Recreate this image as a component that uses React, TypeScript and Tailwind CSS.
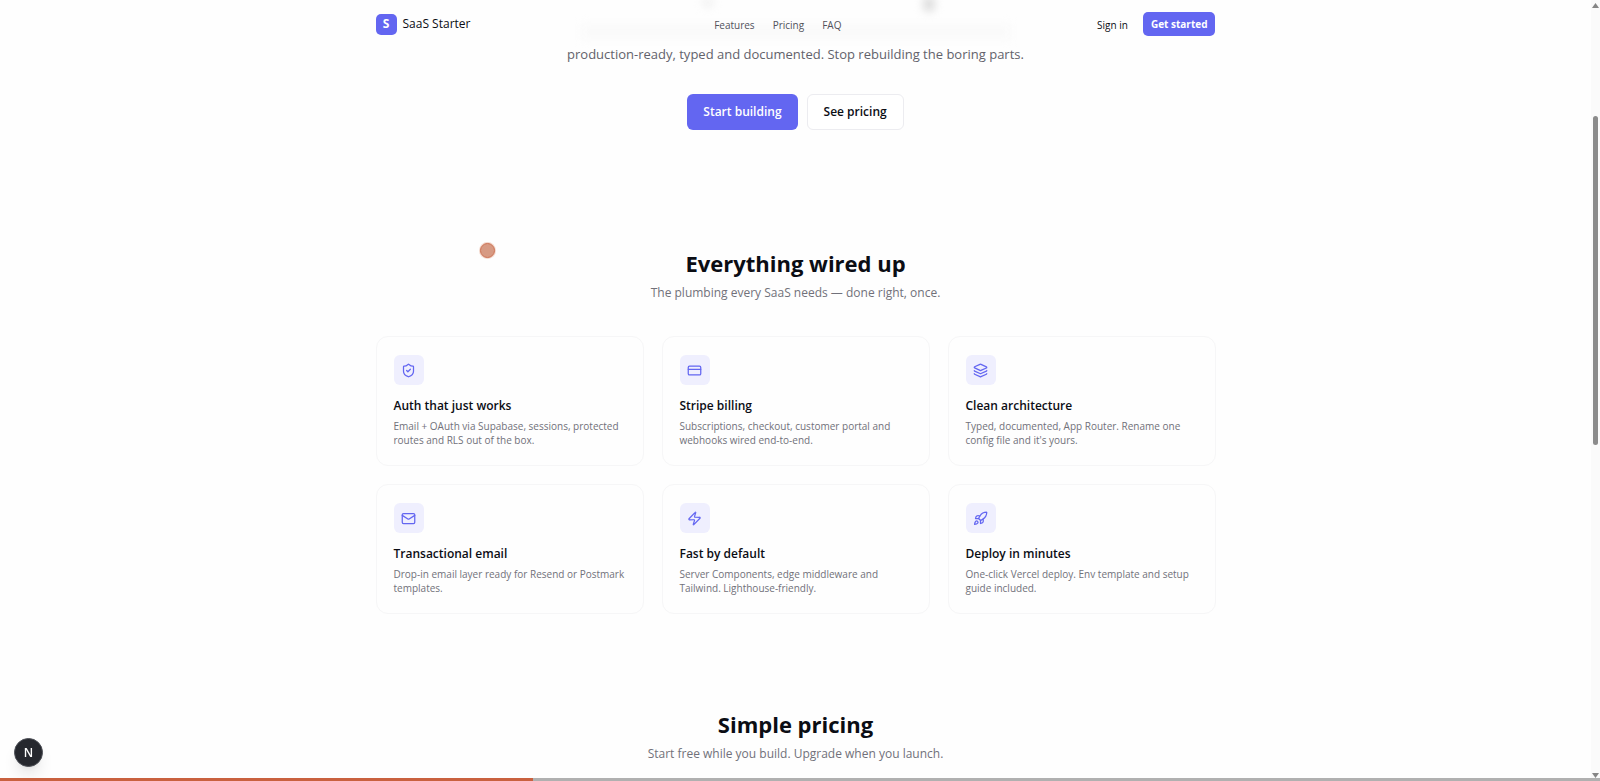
import { CreditCard, Layers, Mail, Rocket, ShieldCheck, Zap } from "lucide-react";

const navLinks = [
    { label: "Features", href: "#features" },
    { label: "Pricing", href: "#pricing" },
    { label: "FAQ", href: "#faq" },
];

const features = [
    {
        icon: ShieldCheck,
        title: "Auth that just works",
        description: "Email + OAuth via Supabase, sessions, protected routes and RLS out of the box.",
    },
    {
        icon: CreditCard,
        title: "Stripe billing",
        description: "Subscriptions, checkout, customer portal and webhooks wired end-to-end.",
    },
    {
        icon: Layers,
        title: "Clean architecture",
        description: "Typed, documented, App Router. Rename one config file and it's yours.",
    },
    {
        icon: Mail,
        title: "Transactional email",
        description: "Drop-in email layer ready for Resend or Postmark templates.",
    },
    {
        icon: Zap,
        title: "Fast by default",
        description: "Server Components, edge middleware and Tailwind. Lighthouse-friendly.",
    },
    {
        icon: Rocket,
        title: "Deploy in minutes",
        description: "One-click Vercel deploy. Env template and setup guide included.",
    },
];

const Header = () => {
    return (
        <header className="relative h-12">
            {/* hero copy showing faintly through the translucent bar */}
            <div aria-hidden="true" className="absolute inset-0 overflow-hidden">
                <div className="absolute left-1/2 top-6 h-4 w-[430px] -translate-x-1/2 bg-[#fafafa] blur-xs" />
                <div className="absolute left-1/2 -top-1 ml-[-94px] h-3 w-3 rounded-full bg-[#f2f2f2] blur-xs" />
                <div className="absolute left-1/2 -top-1 ml-[127px] h-4 w-3 rounded-full bg-[#dcdcdc] blur-xs" />
            </div>
            <div className="relative mx-auto flex h-full max-w-[840px] items-center justify-between">
                <a href="#" className="flex items-center gap-1.5 text-[12px] font-medium text-[#0b0d14]">
                    <span className="flex h-[21px] w-[21px] items-center justify-center rounded-[5px] bg-[#6366f1] font-bold text-white">
                        S
                    </span>
                    SaaS Starter
                </a>
                <nav className="flex items-center gap-[18px] pt-0.5 pr-3 text-[10px] text-[#52525b]">
                    {navLinks.map((link) => (
                        <a key={link.label} href={link.href}>
                            {link.label}
                        </a>
                    ))}
                </nav>
                <div className="flex items-center gap-[15px] text-[10px]">
                    <a href="#" className="pt-0.5 font-medium text-[#0b0d14]">Sign in</a>
                    <button className="h-6 rounded-[5px] bg-[#6366f1] px-2 font-bold text-white">
                        Get started
                    </button>
                </div>
            </div>
        </header>
    );
};

const Hero = () => {
    return (
        <section className="flex flex-col items-center gap-[34px] pb-[118px]">
            <p className="text-[13px] leading-3 text-[#62626b]">
                production-ready, typed and documented. Stop rebuilding the boring parts.
            </p>
            <div className="flex gap-[9px] text-[12px]">
                <button className="h-9 rounded-md bg-[#6366f1] px-4 font-semibold text-white">
                    Start building
                </button>
                <button className="h-9 rounded-md border border-[#ececf0] bg-white px-4 font-semibold text-[#0b0d14]">
                    See pricing
                </button>
            </div>
        </section>
    );
};

const SectionHeading = ({ title, subtitle }: { title: string; subtitle: string }) => {
    return (
        <div className="text-center">
            <h2 className="text-[22px] leading-[30px] font-bold text-[#0b0d14]">{title}</h2>
            <p className="mt-1.5 text-[12px] leading-[18px] text-[#71717a]">{subtitle}</p>
        </div>
    );
};

const Features = () => {
    return (
        <section id="features">
            <SectionHeading title="Everything wired up" subtitle="The plumbing every SaaS needs — done right, once." />
            <div className="mx-auto mt-[34px] grid max-w-[840px] grid-cols-3 gap-[18px]">
                {features.map(({ icon: Icon, title, description }) => (
                    <div key={title} className="min-h-[130px] rounded-xl border border-[#f6f6f7] px-[17px] py-[18px]">
                        <div className="flex h-[30px] w-[30px] items-center justify-center rounded-md bg-[#efeffe] text-[#6366f1]">
                            <Icon size={15} />
                        </div>
                        <h3 className="mt-3 text-[12px] leading-[18px] font-semibold text-[#0b0d14]">{title}</h3>
                        <p className="mt-1 text-[10px] leading-[14px] text-[#71717a]">{description}</p>
                    </div>
                ))}
            </div>
        </section>
    );
};

const Scrollbar = () => {
    return (
        <div aria-hidden="true" className="fixed inset-y-0 right-0 flex w-[9px] flex-col items-center bg-[#fafafa] py-[3px]">
            <svg width="7" height="5" viewBox="0 0 7 5" fill="#858585">
                <path d="M3.5 0 7 5H0z" />
            </svg>
            <div className="w-full grow pt-[108px]">
                <div className="mx-auto h-1/2 w-[5px] rounded-full bg-[#8b8b8b]" />
            </div>
            <svg width="7" height="5" viewBox="0 0 7 5" fill="#858585">
                <path d="M0 0h7L3.5 5z" />
            </svg>
        </div>
    );
};

export default function App() {
    return (
        <div className="min-h-screen bg-[#fefefe] pr-[9px] font-['Open_Sans','Noto_Sans',sans-serif]">
            <Header />
            <main>
                <Hero />
                <Features />
                <section id="pricing" className="pt-[95px]">
                    <SectionHeading title="Simple pricing" subtitle="Start free while you build. Upgrade when you launch." />
                </section>
            </main>

            <button
                aria-label="Open dev tools"
                className="fixed bottom-[14px] left-[14px] flex h-[29px] w-[29px] items-center justify-center rounded-full border border-[#4b4e55] bg-[#26282e] text-[12px] font-semibold text-white shadow-lg"
            >
                N
            </button>
            <div className="fixed left-[480px] top-[243px] h-[15px] w-[15px] rounded-full border border-[#cd7355] bg-[#d79a83] ring-1 ring-[#f3d8cd]" />
            <Scrollbar />
            <div className="fixed inset-x-0 bottom-0 h-[3px] bg-[#b0b0b0]">
                <div className="h-full w-1/3 bg-[#c9613f]" />
            </div>
        </div>
    );
}
